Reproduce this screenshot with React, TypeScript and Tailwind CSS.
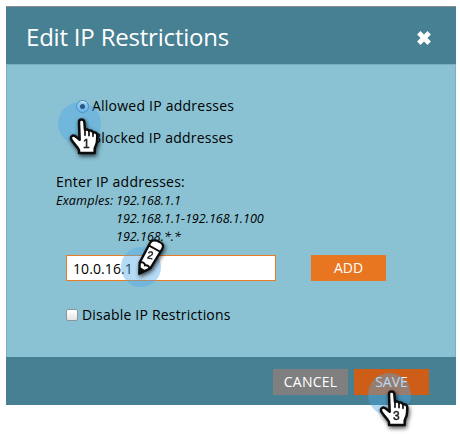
import React from "react";

const Halo = ({ className }: { className: string }) => (
  <div className={`pointer-events-none absolute rounded-full bg-[#4ea8e8]/42 ${className}`} />
);

const Hand = ({ n, className }: { n: number; className: string }) => (
  <svg
    viewBox="0 0 100 125"
    className={`pointer-events-none absolute h-[41.67px] w-[33.33px] overflow-visible drop-shadow-[1px_2px_2px_rgba(0,0,0,0.7)] ${className}`}
  >
    <path
      d="M33 12 C33 2 48 2 49 12 L51 36 C54 33 61 34 63 38 C67 36 73 38 75 43 C81 41 88 46 88 53 L87 70 C87 80 80 86 80 94 L80 105 L33 105 L33 96 C27 85 17 77 10 65 C6 56 14 49 22 55 L35 65 Z"
      fill="white"
      stroke="#0c0c0c"
      strokeWidth="7.5"
      strokeLinejoin="round"
    />
    <path d="M51 34 V52 M63 38 V53 M75 43 V55" stroke="#0c0c0c" strokeWidth="5" strokeLinecap="round" />
    <text x="55" y="91" textAnchor="middle" fontSize="36" fontFamily="Liberation Sans, sans-serif" fill="#222" stroke="#222" strokeWidth="1.5">
      {n}
    </text>
  </svg>
);

const Pencil = () => (
  <svg
    viewBox="0 0 180 180"
    className="pointer-events-none absolute top-[230px] left-[120px] h-[60px] w-[60px] overflow-visible drop-shadow-[1px_2px_2px_rgba(0,0,0,0.7)]"
  >
    <path d="M58 131 L59 98 L90 39 C95 28 108 30 119 36 C130 41 132 48 126 58 L91 115 Z" fill="white" stroke="#0c0c0c" strokeWidth="7" strokeLinejoin="round" />
    <path d="M86 46 L122 66" stroke="#0c0c0c" strokeWidth="6" />
    <path d="M60 98 C69 95 74 99 75 106 C83 105 88 109 89 117" fill="none" stroke="#0c0c0c" strokeWidth="6" />
    <path d="M58 131 L59 113 L74 122 Z" fill="#0c0c0c" stroke="#0c0c0c" strokeWidth="4" />
    <text x="91" y="87" textAnchor="middle" fontSize="32" transform="rotate(10 92 76)" fontFamily="Liberation Sans, sans-serif" fill="#222" stroke="#222" strokeWidth="1.5">
      2
    </text>
  </svg>
);

export default function App() {
  return (
    <div className="relative h-[434px] w-[460px] overflow-hidden bg-white pt-[6px] pl-[6px] font-['Open_Sans','Noto_Sans',sans-serif] text-black">
      <div className="flex h-[399px] w-[450px] flex-col bg-[#8ac2d3]">
        <header className="flex h-[58px] items-center justify-between border-t border-[#8c8e8e] bg-[#468092] pr-[23px] pl-[20px] text-white">
          <h1 className="mt-[3px] text-[24px] leading-8 tracking-[-0.2px] whitespace-nowrap">Edit IP Restrictions</h1>
          <svg viewBox="0 0 18 18" className="mt-[5px] h-[18px] w-[18px]">
            <path d="M3.8 3.8 L14.2 14.2 M14.2 3.8 L3.8 14.2" stroke="white" strokeWidth="4.8" />
          </svg>
        </header>

        <main className="h-[293px] border-x border-t border-[#79afc1] px-[49px] pt-[30px] text-[14px]">
          <label className="ml-[20px] flex h-5 items-center">
            <span className="mt-[2px] flex h-[13px] w-[13px] items-center justify-center rounded-full border border-[#4c83b8] bg-linear-to-b from-[#d9eefb] to-[#7fc0ee]">
              <span className="h-[5px] w-[5px] rounded-full bg-[#10203c]" />
            </span>
            <span className="ml-[3px] tracking-[0.23px] whitespace-nowrap">Allowed IP addresses</span>
          </label>
          <label className="mt-[12px] ml-[20px] flex h-5 items-center">
            <span className="h-[13px] w-[13px]" />
            <span className="ml-[3px] tracking-[0.2px] whitespace-nowrap">Blocked IP addresses</span>
          </label>
          <p className="mt-[25px] h-5 leading-5 tracking-[0.23px]">Enter IP addresses:</p>
          <div className="flex text-[12.6px] leading-[18px] italic">
            <span className="w-[60px] tracking-[0.15px]">Examples:</span>
            <div className="whitespace-nowrap">
              <p>192.168.1.1</p>
              <p>192.168.1.1-192.168.1.100</p>
              <p>192.168.*.*</p>
            </div>
          </div>
          <div className="mt-[9px] ml-[10px] flex">
            <div className="flex h-[26px] w-[210px] items-center border border-[#e87d22] bg-white pl-[6px] text-[14px] tracking-[0.1px]">10.0.16.1</div>
            <button className="ml-[35px] h-[26px] w-[75px] bg-[#e87620] pb-px text-[14px] text-white">ADD</button>
          </div>
          <label className="mt-[23px] ml-[10px] flex h-5 items-center">
            <span className="mt-px h-[12px] w-[12px] rounded-[2px] border border-[#8c979b] bg-linear-to-b from-white to-[#e6e6e6]" />
            <span className="ml-[4px] tracking-[0.2px] whitespace-nowrap">Disable IP Restrictions</span>
          </label>
        </main>

        <footer className="flex h-12 justify-end gap-[6px] bg-[#468092] pt-[12px] pr-[27px] text-[14px] text-white">
          <button className="h-[26px] w-[75px] bg-[#7f7f7f] pb-[2px] tracking-[0.2px]">CANCEL</button>
          <button className="h-[26px] w-[75px] bg-[#ce5d18] pb-[2px]">SAVE</button>
        </footer>
      </div>

      <Halo className="top-[102px] left-[58px] h-[43px] w-[43px]" />
      <Hand n={1} className="top-[118px] left-[68px]" />
      <Halo className="top-[247px] left-[121px] h-[40px] w-[40px]" />
      <Pencil />
      <Halo className="top-[373px] left-[368px] h-[43px] w-[43px]" />
      <Hand n={3} className="top-[390px] left-[378px]" />
    </div>
  );
}
